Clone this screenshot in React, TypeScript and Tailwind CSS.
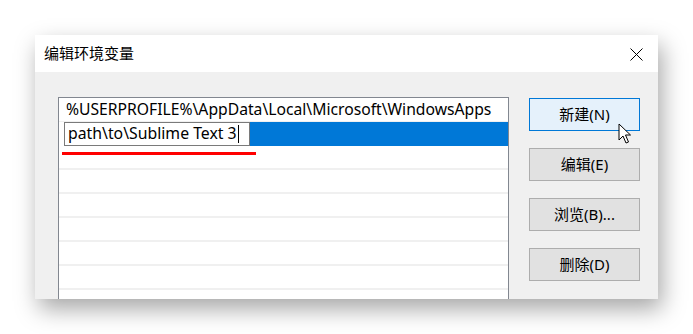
const rows = 10

function DialogButton({ label, active }: { label: string; active?: boolean }) {
  return (
    <button
      className={
        active
          ? 'relative h-[33px] w-[111px] border border-[#0078d7] bg-[#e5f1fb] text-[15px] text-black'
          : 'h-[33px] w-[111px] border border-[#adadad] bg-[#e1e1e1] text-[15px] text-black'
      }
    >
      {label}
      {active && (
        <svg className="absolute left-[88px] top-[24px]" width="14" height="22" viewBox="0 0 14 22">
          <path d="M1 1 L1 17 L5 13 L8 20 L10.5 19 L7.5 12 L12.5 12 Z" fill="#fff" stroke="#000" strokeWidth="1" strokeLinejoin="round" />
        </svg>
      )}
    </button>
  )
}

export default function App() {
  return (
    <div className="h-[334px] w-[693px] bg-white pl-[35px] pt-[35px] font-['Noto_Sans','Noto_Sans_CJK_SC',sans-serif]">
      <div className="flex h-[264px] w-[623px] flex-col overflow-hidden bg-[#f0f0f0] shadow-[4px_10px_22px_rgba(0,0,0,0.35)]">
        {/* Title bar */}
        <div className="flex h-[37px] shrink-0 items-center justify-between bg-white pl-[9px] pr-[15px]">
          <span className="font-['Noto_Sans_CJK_SC',sans-serif] text-[15px] text-black">编辑环境变量</span>
          <svg width="13" height="13" viewBox="0 0 13 13" className="mt-px">
            <path d="M0.5 0.5 L12.5 12.5 M12.5 0.5 L0.5 12.5" stroke="#000" strokeWidth="1" />
          </svg>
        </div>

        {/* Body */}
        <div className="flex flex-1 gap-[20px] pl-[23px] pt-[25px]">
          <div className="h-[260px] w-[451px] shrink-0 border border-[#828790] bg-white">
            <div className="flex h-[24px] items-center border-b border-[#f0f0f0] pl-[7px] text-[15.7px] leading-none text-black">
              %USERPROFILE%\AppData\Local\Microsoft\WindowsApps
            </div>
            <div className="relative flex h-[24px] pl-[5px]">
              <div className="flex h-[24px] w-[186px] items-center border border-[#7a7a7a] bg-white pl-[3px] text-[15.8px] leading-none text-black">
                path\to\Sublime Text 3
                <span className="ml-[1px] h-[18px] w-px bg-black" />
              </div>
              <div className="flex-1 bg-[#0078d7]" />
              <div className="absolute left-[3px] top-[30px] h-[3px] w-[194px] bg-[#ff0000]" />
            </div>
            {Array.from({ length: rows }).map((_, i) => (
              <div key={i} className="h-[24px] border-b-2 border-[#f0f0f0]" />
            ))}
          </div>

          <div className="flex flex-col gap-[17px] pt-px">
            <DialogButton label="新建(N)" active />
            <DialogButton label="编辑(E)" />
            <DialogButton label="浏览(B)..." />
            <DialogButton label="删除(D)" />
          </div>
        </div>
      </div>
    </div>
  )
}
